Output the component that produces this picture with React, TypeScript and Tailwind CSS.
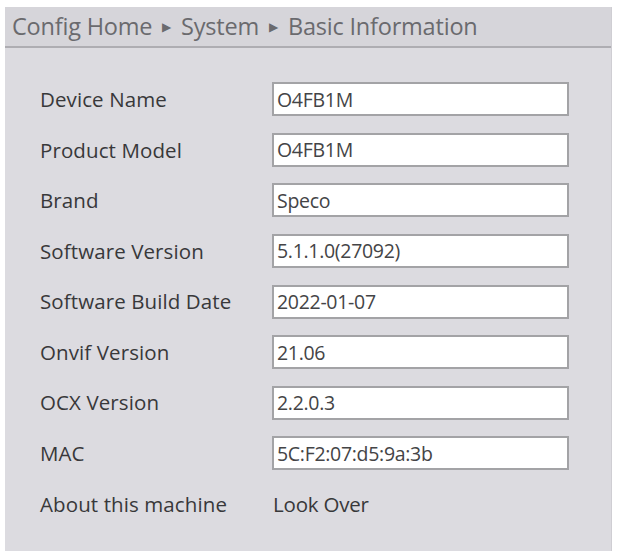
import React from 'react';

const rows: Array<{ label: string; value: string }> = [
  { label: 'Device Name', value: 'O4FB1M' },
  { label: 'Product Model', value: 'O4FB1M' },
  { label: 'Brand', value: 'Speco' },
  { label: 'Software Version', value: '5.1.1.0(27092)' },
  { label: 'Software Build Date', value: '2022-01-07' },
  { label: 'Onvif Version', value: '21.06' },
  { label: 'OCX Version', value: '2.2.0.3' },
  { label: 'MAC', value: '5C:F2:07:d5:9a:3b' },
];

const App = () => {
  return (
    <div className="w-[618px] h-[551px] bg-white pt-[7px] pl-[5px] pr-[6px] overflow-hidden" style={{ fontFamily: '"Open Sans", sans-serif' }}>
      <div className="h-full bg-[#dcdbe0] border-r border-[#cfced3] flex flex-col">
        <div className="h-[41px] bg-[#d6d5da] border-b-2 border-[#aeadb2] flex items-center pl-[7px] text-[23.5px] text-[#6a6a6e] tracking-[-0.2px] leading-none">
          <span>Config Home</span>
          <span className="mx-[10px] text-[12px]">▶</span>
          <span>System</span>
          <span className="mx-[10px] text-[12px]">▶</span>
          <span>Basic Information</span>
        </div>

        <div className="pt-[26px] pl-[35px]">
          {rows.map((row) => (
            <div key={row.label} className="h-[50.6px] flex items-center">
              <div className="w-[232px] text-[20.5px] text-[#38383a] tracking-[0.1px]">{row.label}</div>
              <div className="w-[297px] h-[34px] bg-white border-2 border-[#a3a3a6] flex items-center pl-[3px] text-[19.5px] text-[#444446] tracking-[-0.3px]">
                {row.value}
              </div>
            </div>
          ))}
          <div className="h-[50.6px] flex items-center">
            <div className="w-[232px] text-[20.5px] text-[#38383a] tracking-[0.1px]">About this machine</div>
            <div className="pl-[1px] text-[20.5px] text-[#38383a] tracking-[-0.2px]">Look Over</div>
          </div>
        </div>
      </div>
    </div>
  );
};

export default App;
